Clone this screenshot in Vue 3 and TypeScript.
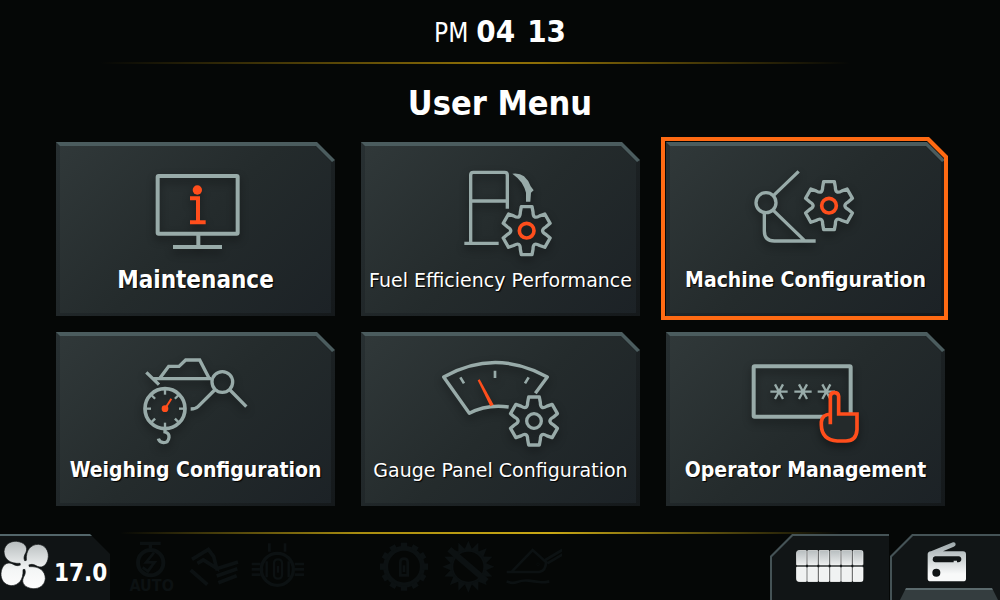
<script setup lang="ts">
import { ref } from 'vue'

interface MenuItem {
  id: string
  label: string
  tone: 'large' | 'bold' | 'plain'
  view: string
}

const items: MenuItem[] = [
  { id: 'maintenance', label: 'Maintenance', tone: 'large', view: '228 108 480 288' },
  { id: 'fuel', label: 'Fuel Efficiency Performance', tone: 'plain', view: '213 108 480 288' },
  { id: 'machine', label: 'Machine Configuration', tone: 'bold', view: '228 108 480 288' },
  { id: 'weighing', label: 'Weighing Configuration', tone: 'bold', view: '228 93 480 288' },
  { id: 'gauge', label: 'Gauge Panel Configuration', tone: 'plain', view: '213 93 480 288' },
  { id: 'operator', label: 'Operator Management', tone: 'bold', view: '228 93 480 288' },
]

const selected = ref('machine')

// Rotates a point around the origin and formats it for path data.
function turn(x: number, y: number, degrees: number): string {
  const a = (degrees * Math.PI) / 180
  const px = x * Math.cos(a) - y * Math.sin(a)
  const py = x * Math.sin(a) + y * Math.cos(a)
  return `${px.toFixed(1)} ${py.toFixed(1)}`
}

// Outline of a six-tooth cog, built one tooth at a time.
const cog = [0, 60, 120, 180, 240, 300]
  .map((d, i) => {
    const start = i === 0 ? 'M' : 'L'
    return (
      `${start}${turn(-16, -72, d)}L${turn(16, -72, d)}L${turn(19, -56, d)}` +
      `C${turn(19, -40, d)} ${turn(25, -36.5, d)} ${turn(-19, -56, d + 60)}`
    )
  })
  .join('') + 'Z'

const quarterTurns = [0, 90, 180, 270]
const dialTicks = [0, 45, 90, 135, 180, 225, 270, 315]
const gearTeeth = Array.from({ length: 12 }, (_, i) => i * 30)
const sunRays = Array.from({ length: 16 }, (_, i) => i * 22.5)
const asterisks = [387, 459, 529]
const cells = [0, 1, 2, 3, 4, 5]
</script>

<template>
  <div class="screen">
    <header class="top">
      <time class="clock" datetime="16:13">
        <span class="meridiem">PM</span><span class="digits">04</span><span class="digits minutes">13</span>
      </time>
    </header>

    <main class="main">
      <h1 class="title">User Menu</h1>
      <div class="grid">
        <button
          v-for="item in items"
          :key="item.id"
          type="button"
          class="card"
          :class="{ selected: selected === item.id }"
          :aria-pressed="selected === item.id"
          @click="selected = item.id"
        >
          <span class="face"></span>
          <svg class="icon" :viewBox="item.view" aria-hidden="true">
            <g v-if="item.id === 'maintenance'" stroke-width="12">
              <rect x="353" y="138" width="240" height="173" rx="3" />
              <path d="M475 311V348M399 351H546" />
              <circle class="hot-fill" cx="472" cy="180" r="14" />
              <path class="hot" d="M450 205H474V277M450 277H497" />
            </g>
            <g v-else-if="item.id === 'fuel'" stroke-width="10">
              <path d="M362 338V135Q362 127 370 127H464Q472 127 472 135V236M362 213H472M343 340H446" />
              <path class="solid" d="M487 131Q508 128 522 139Q536 151 542 169L551 181L543 188L541 215H528V188Q524 172 515 158Q504 143 487 131Z" />
              <g transform="translate(530 302)">
                <path :d="cog" stroke-linejoin="round" />
                <circle class="hot" r="22" stroke-width="11" />
              </g>
            </g>
            <g v-else-if="item.id === 'machine'" stroke-width="10">
              <circle cx="348" cy="218" r="30" />
              <path d="M371 196L446 124M343 248V303Q343 333 373 333H497M370 241L463 331" />
              <g transform="translate(537 227)">
                <path :d="cog" stroke-linejoin="round" />
                <circle class="hot" r="22" stroke-width="11" />
              </g>
            </g>
            <g v-else-if="item.id === 'weighing'" stroke-width="10">
              <path d="M319 142L357 179M340 161H513M360 159L386 124H417L437 105H479L507 159" />
              <circle cx="547" cy="171" r="31" />
              <path d="M570 195L619 245M524 195L474 245Q467 252 452 252" />
              <circle cx="375" cy="251" r="60" stroke-width="11" />
              <path
                v-for="angle in dialTicks"
                :key="angle"
                d="M375 194V209"
                stroke-width="7"
                :transform="`rotate(${angle} 375 251)`"
              />
              <path d="M375 312V321Q388 324 387 337Q385 353 371 353Q358 352 355 341" stroke-width="10" />
              <circle class="hot-fill" cx="375" cy="251" r="10" />
              <path class="hot" d="M375 251L394 221" stroke-width="6" />
            </g>
            <g v-else-if="item.id === 'gauge'" stroke-width="10">
              <path d="M556 205L592 156Q435 69 281 156L358 265Q410 237 476 246" stroke-linejoin="round" />
              <path d="M435 137V159M331 157L342 175M536 157L525 175" stroke-width="8" />
              <path class="hot-fill" d="M383 166L389 163L431 239L421 244Z" />
              <g transform="translate(552 288)">
                <path :d="cog" stroke-linejoin="round" />
                <circle r="22" />
              </g>
            </g>
            <g v-else stroke-width="12">
              <rect x="311" y="124" width="291" height="151" rx="3" />
              <path
                v-for="x in asterisks"
                :key="x"
                :d="`M${x - 26} 200H${x + 26}M${x - 12} 178L${x + 12} 222M${x + 12} 178L${x - 12} 222`"
                stroke-width="7"
              />
              <path
                class="hot hand"
                d="M541 298V214Q542 203 553 203Q565 203 566 214V267H621V314Q619 348 588 348H562Q515 345 514 300V291Q516 269 541 267"
                stroke-width="11"
              />
            </g>
          </svg>
          <span class="label" :class="item.tone">{{ item.label }}</span>
        </button>
      </div>
    </main>

    <footer class="dock">
      <button type="button" class="fan" aria-label="Fan temperature 17.0">
        <svg class="fan-icon" viewBox="0 0 150 150" aria-hidden="true">
          <defs>
            <linearGradient id="silver" gradientUnits="userSpaceOnUse" x1="0" y1="0" x2="0" y2="150">
              <stop offset="0" stop-color="#b4babb" />
              <stop offset="0.6" stop-color="#f4f6f6" />
              <stop offset="1" stop-color="#ffffff" />
            </linearGradient>
            <mask id="blades">
              <path
                v-for="angle in quarterTurns"
                :key="angle"
                :transform="`translate(74 75) rotate(${angle})`"
                d="M-6 6L-14 -5C-44 -3 -62 -18 -62 -41C-60 -62 -43 -72 -25 -71C-1 -69 11 -54 4 -38C-2 -27 -6 -18 5 -6Z"
                fill="#fff"
                stroke="#000"
                stroke-width="2"
              />
              <circle cx="74" cy="75" r="12" fill="#fff" />
            </mask>
          </defs>
          <rect width="150" height="150" fill="url(#silver)" mask="url(#blades)" />
        </svg>
        <span class="temperature">17.0</span>
      </button>

      <div class="indicators">
        <div class="lamps">
          <svg class="lamp" viewBox="363 45 180 192" aria-hidden="true">
            <path d="M420 70H482M451 70V88" stroke-width="10" />
            <circle cx="452" cy="128" r="38" stroke-width="12" />
            <path d="M462 98L438 127H464L444 152M428 142L444 154L456 138" stroke-width="8" />
            <text x="455" y="214" text-anchor="middle">AUTO</text>
          </svg>
          <svg class="lamp" viewBox="555 45 180 192" aria-hidden="true">
            <path d="M576 118L625 88L641 110L650 145L610 120L592 130M572 150L622 194M645 148L714 126M650 168L712 146M655 188L710 167" stroke-width="11" />
          </svg>
          <svg class="lamp" viewBox="747 45 180 192" aria-hidden="true">
            <path d="M808 70V95M855 70V95M755 148H790M755 132H782M755 164H782M876 148H912M884 132H912M884 164H912" stroke-width="8" />
            <circle cx="832" cy="148" r="48" stroke-width="10" />
            <rect x="822" y="118" width="24" height="58" rx="11" stroke-width="7" />
            <path d="M800 124V172M866 124V172M834 138V158" stroke-width="7" />
          </svg>
        </div>
        <div class="lamps">
          <svg class="lamp" viewBox="222 45 180 192" aria-hidden="true">
            <circle cx="312" cy="140" r="55" stroke-width="15" />
            <path v-for="angle in gearTeeth" :key="angle" d="M312 68V84" stroke-width="19" :transform="`rotate(${angle} 312 140)`" />
            <path d="M301 166V126Q301 116 312 116Q323 116 323 126V166ZM312 136V156" stroke-width="8" />
          </svg>
          <svg class="lamp" viewBox="414 45 180 192" aria-hidden="true">
            <circle cx="505" cy="140" r="50" stroke-width="10" />
            <path v-for="angle in sunRays" :key="angle" class="ray" d="M493 90L505 62L517 90Z" :transform="`rotate(${angle} 505 140)`" />
            <path d="M448 88L560 184" stroke-width="18" />
          </svg>
          <svg class="lamp" viewBox="606 45 180 192" aria-hidden="true">
            <path d="M620 156H718Q738 152 738 126L698 90L636 154M736 120L790 88M742 130L790 102M620 184Q636 192 652 186T686 182T718 186T748 184" stroke-width="8" />
            <circle cx="714" cy="133" r="4" />
          </svg>
        </div>
      </div>

      <nav class="tabs" aria-label="Shortcuts">
        <button type="button" class="tab" aria-label="Keypad">
          <svg class="keypad" viewBox="0 0 204 96" aria-hidden="true">
            <defs>
              <linearGradient id="key" x1="0" y1="0" x2="0" y2="1">
                <stop offset="0" stop-color="#b7bdbf" />
                <stop offset="1" stop-color="#eceeee" />
              </linearGradient>
              <clipPath id="pad"><rect width="204" height="96" rx="12" /></clipPath>
            </defs>
            <g clip-path="url(#pad)">
              <template v-for="n in cells" :key="n">
                <rect :x="n * 34 + 1" y="1" width="30" height="44" rx="2" fill="url(#key)" stroke="#f1f3f3" stroke-width="2" />
                <rect :x="n * 34 + 1" y="51" width="30" height="44" rx="2" fill="#f0f2f2" stroke="#ffffff" stroke-width="2" />
              </template>
            </g>
          </svg>
        </button>
        <button type="button" class="tab active" aria-label="Radio">
          <svg class="radio" viewBox="0 0 120 120" aria-hidden="true">
            <defs>
              <linearGradient id="body" gradientUnits="userSpaceOnUse" x1="0" y1="0" x2="0" y2="120">
                <stop offset="0" stop-color="#9ca7aa" />
                <stop offset="0.8" stop-color="#f8f9f9" />
              </linearGradient>
            </defs>
            <path
              fill="url(#body)"
              fill-rule="evenodd"
              d="M12 28L78 1Q86 0 86 7Q86 12 80 14L48 28H108Q117 28 117 37V110Q117 118 108 118H11Q2 118 2 110V37Q2 29 12 28ZM24 43Q17 44 17 52Q17 60 25 61H80V56H90V61H94Q103 60 103 52Q103 44 95 43ZM28 80A12 12 0 1 0 28 104A12 12 0 1 0 28 80Z"
            />
          </svg>
        </button>
      </nav>
    </footer>
  </div>
</template>

<style>
body {
  margin: 0;
  background: #050706;
}
</style>

<style scoped>
.screen {
  display: flex;
  flex-direction: column;
  min-height: 100vh;
  background: #050706;
  color: #fff;
  font-family: 'DejaVu Sans Condensed', 'DejaVu Sans', sans-serif;
}

button {
  border: 0;
  padding: 0;
  background: none;
  color: inherit;
  font: inherit;
  cursor: pointer;
}

.top {
  height: 64px;
  background: linear-gradient(90deg, transparent 10%, #8d6e06 48%, #8d6e06 54%, transparent 85%) bottom / 100% 2px no-repeat;
}

.clock {
  display: flex;
  justify-content: center;
  align-items: baseline;
  line-height: 62px;
}

.meridiem {
  margin-right: 8px;
  font-size: 26px;
}

.digits {
  font-size: 31px;
  font-weight: 700;
}

.minutes {
  margin-left: 12px;
}

.main {
  flex: 1;
}

.title {
  margin: 0;
  font-size: 34px;
  line-height: 78px;
  font-weight: 700;
  text-align: center;
}

.grid {
  display: grid;
  grid-template-columns: repeat(3, 1fr);
  gap: 16px 26px;
  padding: 0 55px 26px 56px;
}

.card {
  position: relative;
  display: flex;
  flex-direction: column;
  align-items: center;
  padding: 24px 0 18px;
}

.face,
.face::before,
.face::after {
  position: absolute;
  inset: 0;
}

.face {
  background: #4b5c5e;
  clip-path: polygon(0 0, calc(100% - 18px) 0, 100% 18px, 100% 100%, 0 100%);
}

.face::before {
  content: '';
  background: linear-gradient(135deg, #283032, #15191b);
  clip-path: polygon(0 0, 4px 4px, calc(100% - 19px) 4px, calc(100% - 3px) 20px, 100% 18px, 100% 100%, 0 100%);
}

.face::after {
  content: '';
  inset: 4px 4px 3px;
  background: linear-gradient(135deg, #303839, #242b2c 50%, #1c2226);
  clip-path: polygon(0 0, calc(100% - 16px) 0, 100% 16px, 100% 100%, 0 100%);
}

.selected::after {
  content: '';
  position: absolute;
  inset: -5px -3px -4px -5px;
  background: #ff6a13;
  clip-path: polygon(
    evenodd,
    0 0, calc(100% - 19px) 0, 100% 19px, 100% 100%, 0 100%, 0 0,
    4px 4px, calc(100% - 21px) 4px, calc(100% - 4px) 21px, calc(100% - 4px) calc(100% - 4px), 4px calc(100% - 4px), 4px 4px
  );
}

.icon {
  position: relative;
  width: 160px;
  height: 96px;
  fill: none;
  stroke: #98aba9;
  filter: drop-shadow(0 4px 4px #0006);
}

.hot {
  stroke: #ff4e1c;
}

.hot-fill {
  fill: #ff4e1c;
  stroke: none;
}

.hand {
  fill: #242a2b;
}

.solid {
  fill: #98aba9;
  stroke: none;
}

.label {
  position: relative;
  line-height: 36px;
  white-space: nowrap;
  text-shadow: 1px 1px 1px #000;
}

.plain {
  font-family: 'DejaVu Sans', sans-serif;
  font-size: 19px;
}

.bold {
  font-size: 21px;
  font-weight: 700;
}

.large {
  font-size: 24px;
  font-weight: 700;
}

.dock {
  display: flex;
  height: 68px;
  background: linear-gradient(90deg, transparent 12%, #a98d10 36%, #c9a815 55%, transparent 84%) top / 100% 2px no-repeat;
}

.fan {
  display: flex;
  align-items: center;
  gap: 4px;
  width: 110px;
  margin-top: 2px;
  background: linear-gradient(#53666a, #53666a) top / 100% 2px no-repeat, #101415;
  clip-path: polygon(0 0, 90px 0, 100% 20px, 100% 100%, 0 100%);
}

.fan-icon {
  flex: none;
  width: 50px;
  height: 50px;
  margin-bottom: 4px;
}

.temperature {
  padding-top: 12px;
  font-size: 24px;
  line-height: 28px;
  font-weight: 700;
}

.indicators {
  display: flex;
  flex: 1;
  gap: 65px;
  padding: 3px 0 0 11px;
}

.lamps {
  display: flex;
  gap: 4px;
}

.lamp {
  width: 60px;
  height: 64px;
  fill: none;
  stroke: #0c1112;
}

.lamp text {
  fill: #0c1112;
  stroke: none;
  font-size: 48px;
  font-weight: 700;
}

.ray {
  fill: #0c1112;
  stroke: none;
}

.tabs {
  display: flex;
  gap: 1px;
  padding-top: 2px;
}

.tab {
  position: relative;
  display: flex;
  justify-content: center;
  width: 119px;
  background: #455356;
  clip-path: polygon(22px 0, 100% 0, 100% 100%, 0 100%, 0 22px);
}

.tab + .tab {
  width: 110px;
  padding-left: 4px;
}

.tab::before {
  content: '';
  position: absolute;
  inset: 2px 0 0 2px;
  background: #111516;
  clip-path: polygon(21px 0, 100% 0, 100% 100%, 0 100%, 0 21px);
}

.active::after {
  content: '';
  position: absolute;
  inset: auto 2px 0 10px;
  height: 12px;
  background: linear-gradient(#5b6a6d 2px, #343d3f 2px);
  clip-path: polygon(6px 0, calc(100% - 6px) 0, 100% 100%, 0 100%);
}

.keypad {
  position: relative;
  width: 68px;
  height: 32px;
  margin-top: 16px;
}

.radio {
  position: relative;
  width: 40px;
  height: 40px;
  margin-top: 8px;
}
</style>
